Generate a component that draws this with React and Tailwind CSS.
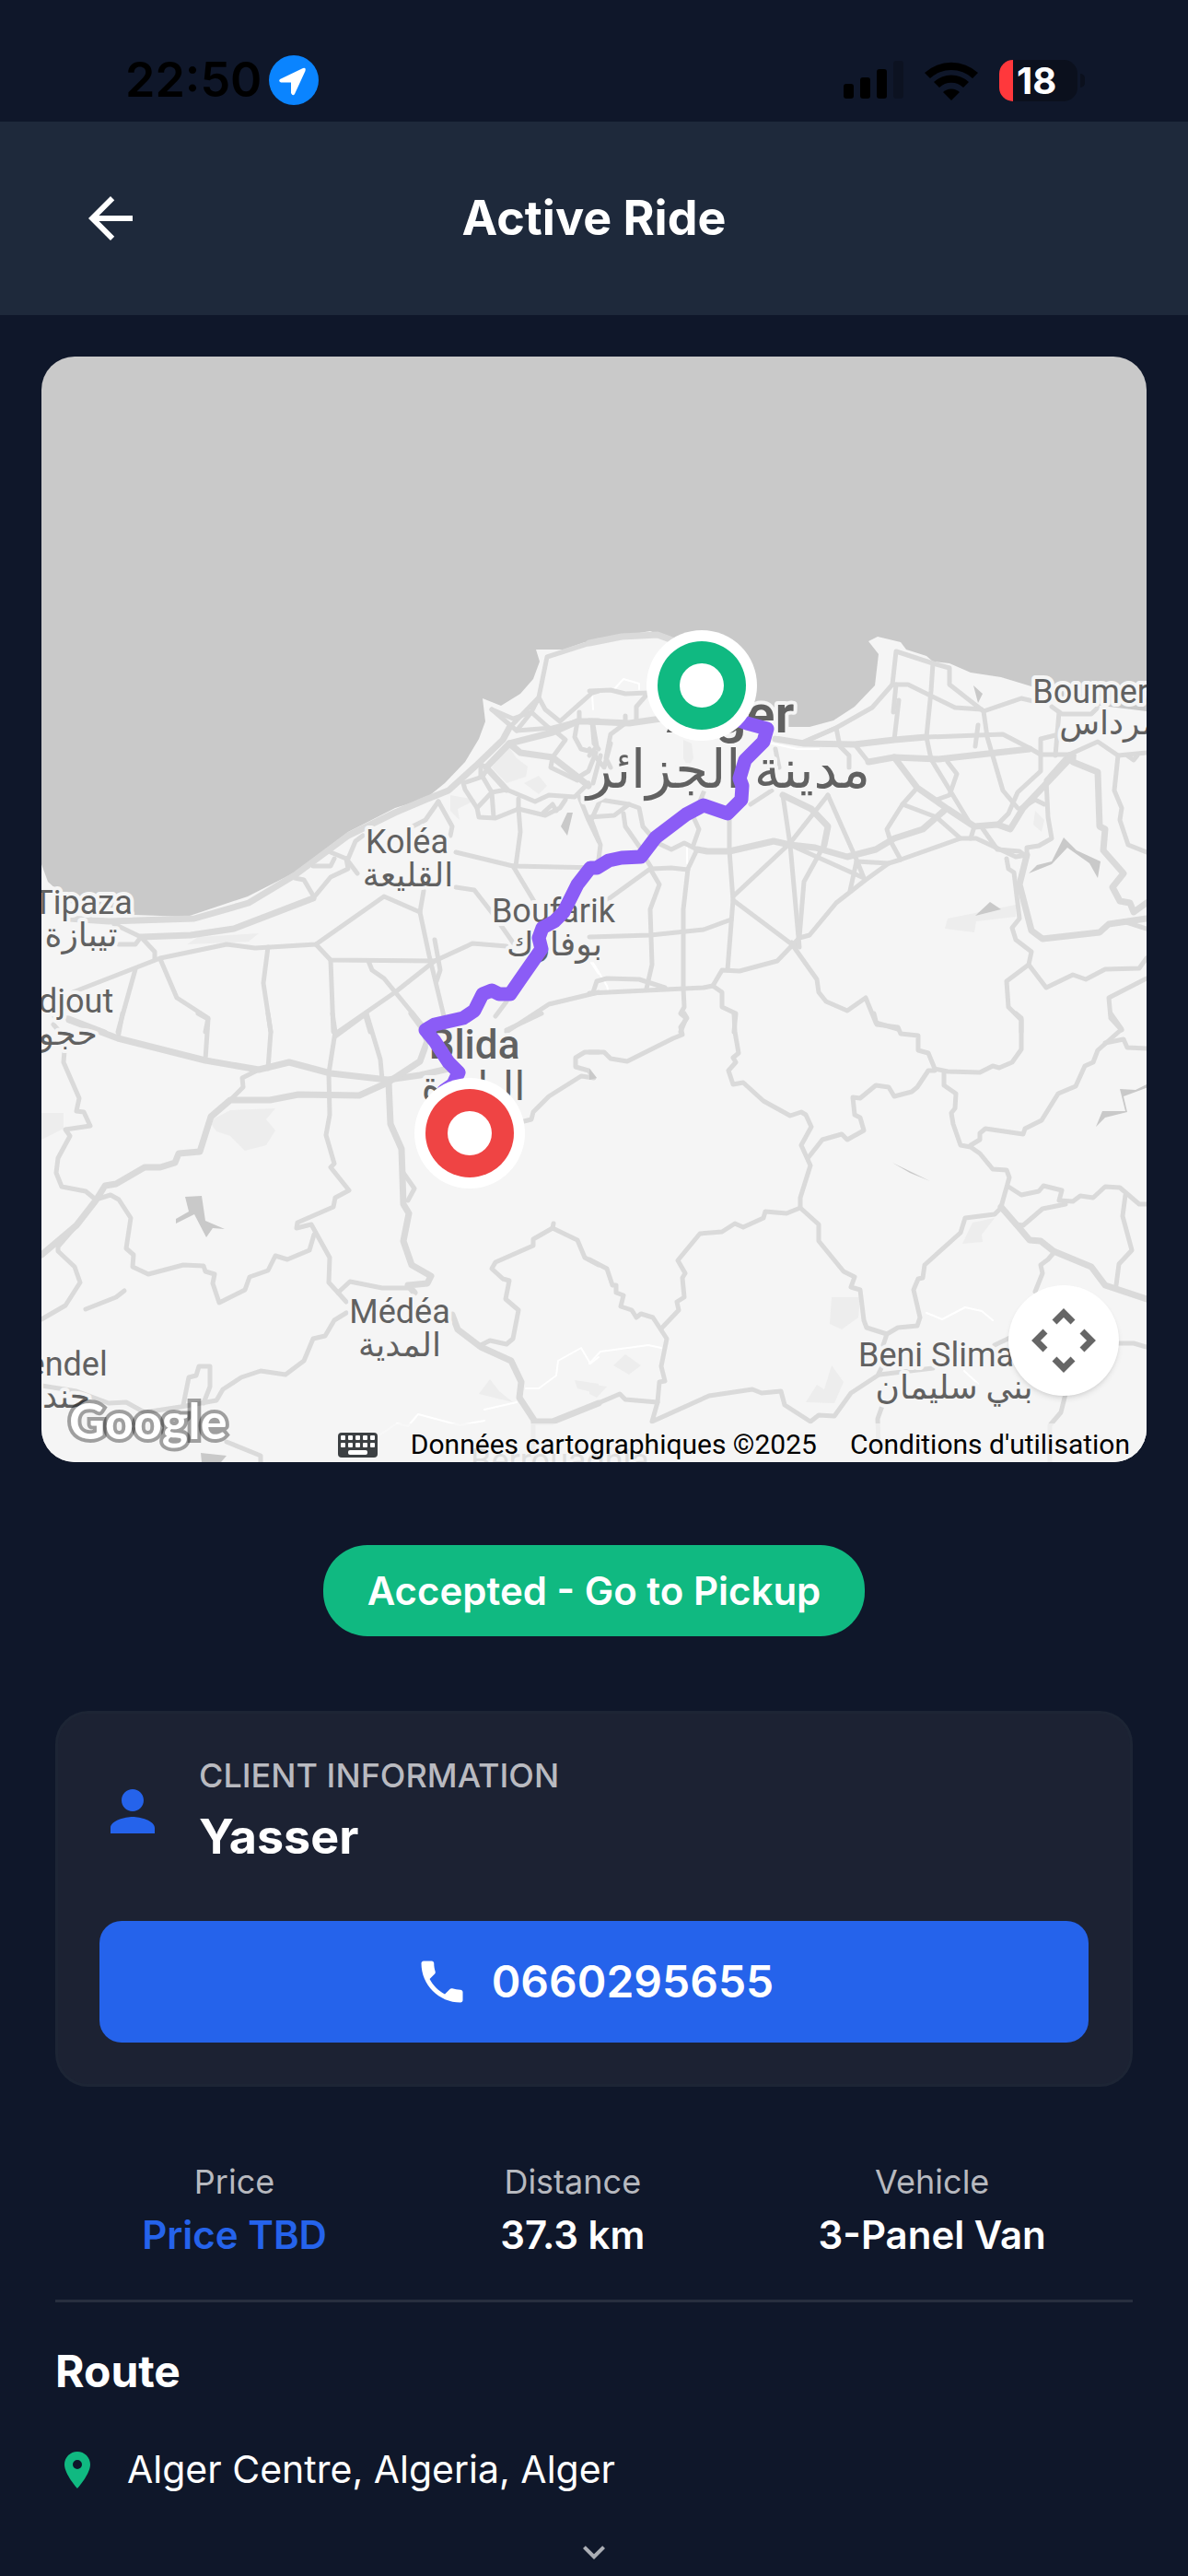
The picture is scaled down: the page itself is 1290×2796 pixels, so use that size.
import {
  MdArrowBack,
  MdKeyboardArrowDown,
  MdLocationOn,
  MdPerson,
  MdPhone,
} from 'react-icons/md';

// The map is digitised in four tiles; every tile has its own origin on the 1200x1200 canvas
const TILES = [
  {
    x: -5,
    y: 233,
    major: [
      '90,1130 200,1140 440,1130 590,1080 720,990 870,860 1000,785 1085,745 1150,715 1230,630 1300,550 1320,510',
      '1310,712 1255,640 1320,560 1440,525 1510,490 1568,490',
      '1320,560 1350,590 1440,605 1510,670 1540,700',
      '290,1190 430,1185 550,1165 770,1065',
    ],
    minor: [
      '1320,510 1400,410 1425,280 1568,225',
      '215,1150 290,1190 330,1240 330,1262',
      '770,1065 820,995 870,970 865,935 820,915',
      '230,1215 275,1215 290,1190',
      '100,1370 345,1260 530,1215 610,1227 780,1215 970,1060 1070,1110 1095,1250 1135,1450 1140,1500',
      '780,1215 820,1265 1110,1268 1215,1213 1310,1220',
      '345,1262 390,1390 478,1455 470,1500',
      '275,1295 225,1500',
      '645,1225 632,1340 653,1500',
      '820,1265 828,1500',
      '925,1270 935,1300 970,1325 1085,1490',
      '1110,1268 1000,1370 840,1500',
      '918,1450 930,1500',
      '720,1000 745,1005 772,1055',
      '770,960 820,960 830,935',
      '870,935 890,880 910,860',
      '865,935 895,985',
      '1080,1040 1070,1110',
      '1170,915 1330,960 1568,965',
      '1330,960 1390,1080',
      '1345,770 1350,850 1338,960',
      '1120,750 1160,830 1155,860',
      '1120,750 1085,810 1050,830',
      '1170,1030 1220,1038 1275,1120 1330,1210',
      '1190,690 1195,710 1230,770 1270,720 1245,670 1190,690',
      '1230,770 1235,800 1280,805 1345,775 1420,795 1460,770 1475,745',
      '1240,665 1240,630 1260,640 1245,670',
      '1270,720 1275,800',
      '1270,720 1310,712 1390,750 1430,730 1500,735 1540,690',
      '1345,775 1345,740',
      '1270,450 1330,480 1380,460 1430,510',
      '1270,450 1340,520 1380,460 1400,410 1420,450 1460,490 1550,395 1568,390',
      '1340,520 1440,510 1510,490',
      '1440,605 1435,640 1510,680',
      '1440,605 1475,550 1445,520',
      '1510,490 1500,540 1520,580 1560,590 1540,650 1515,670',
      '1515,460 1515,490 1550,490 1555,560 1568,580',
      '1110,1200 1125,1300 1115,1335',
      '1280,1450 1310,1400',
      '1310,1500 1430,1410 1568,1370',
      '1515,735 1540,810 1568,880',
      '50,1450 90,1455 190,1500',
      '1415,785 1440,760 1450,780',
    ],
    water: ['1482,785 1497,787 1480,860 1462,830'],
    parks: [
      '1315,570 1340,610 1370,635 1365,670 1310,690 1270,640',
      '1360,690 1400,665 1425,700 1400,725',
      '1155,730 1225,745 1175,775 1180,810 1155,780',
      '450,1190 620,1180 590,1205 420,1215',
    ],
    tracks: ['1550,400 1553,450', '1548,1275 1568,1310'],
  },
  {
    x: 595,
    y: 233,
    major: [
      '300,905 330,913 390,913 515,880 560,890 630,900 720,930 800,905 850,870 930,840 990,780',
      '520,545 600,562 740,565 850,550 940,540',
      '780,620 850,605 975,612 1230,578',
      '850,605 915,705 1000,775 1075,830 1140,825 1175,840 1210,770 1350,600',
      '1220,925 1200,1020 1235,1170 1265,1197 1425,1175 1450,1150 1555,1130',
      '540,730 620,775 665,830 655,890',
      '0,490 110,495 200,480',
      '1350,600 1350,620 1420,655 1425,830 1440,840 1435,910 1490,985 1460,1030 1480,1075 1510,1080 1520,1110 1555,1080',
      '0,235 90,212 190,208 240,228',
    ],
    minor: [
      '0,390 60,388 100,400 165,395 130,440 130,490',
      '100,470 100,495 60,530 45,610 60,640',
      '0,600 20,570 10,500',
      '0,580 40,640 60,560',
      '10,690 30,600',
      '940,540 1155,532 1230,575 1260,598 1340,598',
      '740,565 780,620',
      '600,555 690,510 790,445 845,370 855,260 960,300 1005,315 1005,370 1100,455 1205,415 1250,425',
      '845,370 890,368 1020,445 1095,450',
      '960,300 955,390 940,540 955,612 1065,825',
      '865,420 850,550',
      '855,370 848,460',
      '1100,455 1110,540 1155,715 1195,770',
      '1085,500 1078,570',
      '1310,460 1300,600',
      '1300,535 1260,545 1260,650 1195,720 1170,790 1140,825',
      '1340,598 1275,680 1280,800 1290,870 1255,895 1220,900 1220,930',
      '1000,620 1025,660 1005,730 970,745',
      '915,705 875,760 830,840 840,880 870,940',
      '875,760 970,800 1035,870 870,940 835,952',
      '390,790 392,910 400,1070 385,1300',
      '540,730 560,890 585,1225 565,1210',
      '665,730 560,885 400,1060',
      '665,730 745,940 765,1000 560,890',
      '655,890 600,1010 585,1190',
      '745,945 835,952 770,1005 690,1080 615,1185 585,1195 525,1270 420,1303 370,1300 345,1350 320,1355 0,1375',
      '745,945 728,1040',
      '0,1192 170,1185 320,1168 395,1135',
      '300,905 275,970 262,1100 262,1360 265,1420 255,1440 270,1455 255,1500',
      '50,1070 170,970 195,1020 170,1100 175,1280 160,1360',
      '155,930 175,970 230,965 275,972',
      '400,1070 565,1215 635,1330 640,1370 660,1400 720,1430 770,1390 800,1470 860,1490',
      '345,1350 370,1370 370,1420 410,1440 403,1500',
      '10,1370 20,1335 50,1325 140,1330 210,1355',
      '1035,870 1080,870 1190,930 1220,925',
      '1075,830 1065,870',
      '1095,835 1140,905 1200,912 1220,930',
      '1165,935 1170,970 1185,980 1200,1130 1180,1160 1190,1200 1235,1240 1225,1280 1165,1335 1170,1420 1205,1460 1205,1500',
      '1225,1280 1275,1355 1350,1315 1385,1330 1440,1297 1535,1292 1555,1260',
      '1555,1325 1450,1390 1455,1455 1485,1495',
      '1340,598 1420,555 1475,600 1555,592',
      '1475,600 1465,715 1485,770 1480,810 1505,890 1555,915',
      '1490,1140 1555,1165',
      '1290,440 1320,465 1400,465 1420,445',
      '1500,600 1520,615 1530,600',
      '0,800 70,795 110,760 140,770 150,830 190,885 230,905 265,885 300,905',
      '110,760 30,745 5,810 30,890 25,940',
      '95,790 100,830 160,930',
      '320,720 290,800 305,840 290,890',
      '450,760 510,715',
      '620,545 690,510 700,570 725,600 725,640',
      '520,580 530,640',
      '1205,770 1245,745 1270,760',
    ],
    water: [
      '1072,372 1097,400 1085,430',
      '1225,985 1250,958 1290,945 1325,868 1360,910 1428,945 1420,998 1395,950 1335,900 1290,955',
      '1077,1123 1117,1077 1148,1102',
    ],
    parks: [
      '262,550 285,560 290,610 275,640 262,610',
      '1000,1132 1190,1085 1190,1125 1080,1140 1075,1175 992,1165',
      '1245,780 1270,810 1262,850 1240,825',
    ],
    tracks: ['70,385 95,352 140,365 140,385', '510,560 580,580 640,580', '273,900 273,950', '10,1275 50,1350 55,1375'],
  },
  {
    x: -5,
    y: 713,
    major: [
      '90,20 225,82 470,152 620,182 705,160 820,195 980,215 1070,200 1150,180',
      '1045,0 1075,45 1090,90 1070,155 980,225 900,268 730,265 650,283 540,283 485,335 455,450 395,455 385,485 345,502 300,500 220,555 190,562 165,610 110,690 13,785',
      '983,225 988,360 1018,440 1022,620 1038,650 1022,740 1045,820 1100,855 1090,880 1035,885 1055,910',
      '1160,980 1175,1030 1240,1085 1325,1130 1352,1200 1348,1250 1390,1328 1440,1328 1568,1268',
    ],
    minor: [
      '240,0 225,82',
      '450,0 478,18 470,150',
      '645,0 653,60 645,180',
      '825,0 832,60 815,195 818,330 808,395 830,490 820,500 850,545 872,575 833,600 828,630 728,680 725,698 765,688 818,795 815,875 840,910 865,940',
      '832,75 920,0 960,150 965,215',
      '620,182 572,210 575,240 540,283',
      '1022,520 1055,570 1035,610',
      '840,910 875,872 965,895 1035,893',
      '45,35 80,80 75,160 118,275 110,318 130,322 148,365 80,378 92,400 60,470 55,520 70,565 135,580 165,605',
      '165,605 205,590 230,605 262,665 250,765 270,785 268,825 310,850 410,818 465,822 470,840 495,850 490,880 510,942 580,900 595,858 645,838 665,790 700,800 760,770 775,720',
      '110,690 60,760 60,775 105,825 122,875 80,950 13,995',
      '135,962 220,925 245,903',
      '865,975 830,1000 805,1050 770,1060 745,1130 695,1175 625,1165 570,1185 520,1225 500,1260 400,1280 300,1300 250,1265 200,1270 110,1230 13,1212',
      '410,1275 425,1185 445,1180 453,1150 483,1150 483,1215 465,1270',
      '530,1395 625,1440 625,1465',
      '1240,1080 1265,1065 1310,1078 1328,1058 1345,965 1308,930 1320,870 1300,865 1270,830 1280,810 1385,755 1385,735 1440,700 1510,738 1530,795 1568,820',
      '1360,350 1380,345 1385,320 1430,270 1520,205 1555,210 1540,185 1505,175 1505,145 1530,125 1568,125',
      '1310,55 1410,0',
      '1440,700 1443,685',
      '1385,1328 1385,1462',
    ],
    water: [
      '413,598 460,595 470,675 525,702 490,700 472,730 440,655 387,683 387,668 425,645',
      '458,1430 530,1440 515,1462 460,1462',
    ],
    parks: [
      '480,350 540,315 665,310 640,345 665,380 640,430 580,448 540,400 500,385',
      '13,325 75,325 75,375 13,410',
      '1265,1190 1290,1230 1330,1265 1235,1240',
      '1500,1195 1568,1205 1568,1240 1510,1220',
    ],
    tracks: ['960,1370 1005,1335 1035,1345 1065,1305 1180,1340 1250,1325', '1365,1220 1400,1220 1450,1180 1455,1130 1520,1090 1545,1140 1568,1120', '1250,1290 1340,1265'],
  },
  {
    x: 595,
    y: 713,
    major: [
      '1150,630 1200,700 1230,738 1260,740 1295,775 1400,825 1440,885 1555,930',
    ],
    minor: [
      '0,125 40,125 60,148 105,155 235,80 260,68 255,45 272,15 265,0',
      '403,0 405,60 417,130 400,145 410,160 388,185 400,230 430,225 485,285 560,332 590,322 605,330 620,368 590,430 617,495 588,600 588,632 640,688 640,740 710,840 740,858 730,890 755,900 765,1000 775,1022 830,1045',
      '795,0 802,35 860,45 870,65 918,72 918,120 945,130 965,180 1000,190 1090,192 1125,170 1145,178 1180,158 1205,118 1205,15 1190,0',
      '965,185 945,187 915,240 900,255 850,270 835,240 800,235 755,275 735,272 740,330 755,340 765,380 720,412 705,392 650,410 613,468',
      '990,195 990,235 1022,262 1020,310 1010,325 1015,360 1035,428 1065,435 1090,455 1125,508 1165,510 1172,535 1150,630',
      '1065,430 1090,410 1090,390 1105,375 1210,393 1215,375 1262,348 1308,262 1358,238 1382,172 1405,160 1418,120 1485,50 1455,0',
      '1440,95 1490,85 1500,110 1555,115',
      '1170,565 1205,590 1255,578 1268,562 1318,575 1312,610 1350,612 1370,595 1405,600 1440,565 1480,568 1535,622 1555,622',
      '1190,688 1210,690 1265,635 1330,620',
      '1495,590 1488,660 1515,770 1478,815 1470,885',
      '1148,632 1130,655 1050,665 1035,715 935,818 930,860 918,865 905,900 922,990 915,1018 860,1022 830,1045 820,1080',
      '588,632 550,652 490,645 485,665 430,697 405,685 370,710 308,717 247,805 268,845 260,860 265,925 245,940 250,965 200,1025',
      '0,800 50,832 65,885 75,885 75,910 95,918 88,955 118,965 130,990 145,978 178,990 215,1060 200,1150 212,1198 195,1200 190,1265 175,1330 335,1245 455,1223 480,1235 535,1230 545,1275 618,1330 640,1308 685,1310 730,1235 805,1180 815,1155',
      '0,1280 85,1240 100,1258 190,1265',
      '1295,780 1280,800 1260,820 1265,845 1245,905',
      '1130,1080 1200,1040',
      '1475,1075 1520,1075 1555,1085',
      '1330,1240 1315,1300 1285,1340 1285,1460',
      '820,1270 805,1320 808,1400',
      '810,1175 960,1155',
    ],
    water: [
      '0,180 20,210 0,215',
      '1480,245 1525,248 1560,228 1560,240 1492,270 1502,322 1440,340 1415,370 1432,318 1495,318',
      '845,485 950,547 895,518',
    ],
    parks: [
      '675,925 755,925 750,990 705,1030 670,1010',
      '675,1145 710,1200 685,1270 605,1265 635,1210 655,1225',
      '1070,680 1130,665 1095,720 1098,745 1040,750',
      '100,1110 145,1145 110,1175 68,1145',
      '0,1205 50,1215 20,1250 0,1240',
    ],
    tracks: ['0,1140 30,1100 165,1080 200,1090', '940,975 985,995 1050,958 1095,970 1125,1000', '1045,1165 1085,1205'],
  },
];

const COAST =
  'M0 551 7 570 40 600 100 606 158 608 224 586 275 560 333 516 384 490 417 480 438 463 460 440 475 415 482 396 479 371 499 379 520 366 534 350 541 331 537 318 567 318 590 310 626 304 661 298 688 308 750 330 765 380 800 402 834 402 860 395 883 380 905 357 909 323 898 309 908 304 933 310 939 318 961 325 968 331 986 333 1009 343 1042 348 1075 358 1110 374 1200 385V1200H0Z';

const RIDE_PATH =
  'M717 380 766 398 788 404 784 418 764 438 758 458 761 466 760 481 745 496 719 487 700 497 667 522 651 543 630 544 616 547 603 555 596 555 582 573 567 603 557 613 544 620 540 631 543 643 520 676 509 692 497 692 489 688 479 692 470 710 458 718 427 725 417 731 427 743 442 766 453 777 447 790 437 797 465 843';

const PLACES = [
  { x: 397, y: 539, name: 'Koléa', arabicX: 398, arabicY: 575, arabic: 'القليعة' },
  { x: 45, y: 605, name: 'Tipaza', arabicX: 43, arabicY: 640, arabic: 'تيبازة' },
  { x: 15, y: 712, name: 'Hadjout', arabicX: 12, arabicY: 747, arabic: 'حجوط' },
  { x: 556, y: 614, name: 'Boufarik', arabicX: 557, arabicY: 650, arabic: 'بوفارك' },
  { x: 1168, y: 376, name: 'Boumerdès', arabicX: 1174, arabicY: 410, arabic: 'بومرداس' },
  { x: 389, y: 1049, name: 'Médéa', arabicX: 389, arabicY: 1085, arabic: 'المدية' },
  { x: 12, y: 1106, name: 'Djendel', arabicX: 14, arabicY: 1141, arabic: 'جندل' },
  { x: 991, y: 1096, name: 'Beni Slimane', arabicX: 991, arabicY: 1131, arabic: 'بني سليمان' },
];

const STATS = [
  { label: 'Price', value: 'Price TBD', color: 'text-[#2563eb]' },
  { label: 'Distance', value: '37.3 km', color: 'text-white' },
  { label: 'Vehicle', value: '3-Panel Van', color: 'text-white' },
];

function place(tile, line) {
  return line
    .split(' ')
    .map((pair) => {
      const [x, y] = pair.split(',').map(Number);
      return `${Math.round(tile.x + x * 0.389)},${Math.round(tile.y + y / 3)}`;
    })
    .join(' ');
}

function Marker({ x, y, color }) {
  return (
    <g>
      <circle cx={x} cy={y} r="60" fill="#fff" />
      <circle cx={x} cy={y} r="48" fill={color} />
      <circle cx={x} cy={y} r="24" fill="#fff" />
    </g>
  );
}

function MapCanvas() {
  return (
    <svg viewBox="0 0 1200 1200" className="block h-full w-full" role="img" aria-label="Ride map">
      <rect width="1200" height="1200" fill="#c9c9c9" />
      <path d={COAST} fill="#f5f5f5" />

      {TILES.map((tile) => (
        <g key={`${tile.x}:${tile.y}`} fill="none" strokeLinejoin="round" strokeLinecap="round">
          {tile.parks.map((line) => (
            <polygon key={line} points={place(tile, line)} fill="#ededed" />
          ))}
          {tile.water.map((line) => (
            <polygon key={line} points={place(tile, line)} fill="#c9c9c9" />
          ))}
          {tile.tracks.map((line) => (
            <polyline key={line} points={place(tile, line)} stroke="#fff" strokeWidth="2" />
          ))}
          {tile.minor.map((line) => (
            <polyline key={line} points={place(tile, line)} stroke="#dadada" strokeWidth="5" />
          ))}
          {tile.major.map((line) => (
            <polyline key={line} points={place(tile, line)} stroke="#dadada" strokeWidth="7" />
          ))}
        </g>
      ))}

      <g
        fill="#616161"
        stroke="#f5f5f5"
        strokeWidth="8"
        strokeLinejoin="round"
        textAnchor="middle"
        paintOrder="stroke"
        className="font-['Roboto','DejaVu_Sans',sans-serif]"
      >
        {PLACES.map((p) => (
          <g key={p.name} fontSize="36">
            <text x={p.x} y={p.y}>{p.name}</text>
            <text x={p.arabicX} y={p.arabicY}>{p.arabic}</text>
          </g>
        ))}
        <text x="748" y="408" fontSize="58" fontWeight="600">Alger</text>
        <text x="746" y="468" fontSize="58">مدينة الجزائر</text>
        <text x="470" y="762" fontSize="44" fontWeight="500">Blida</text>
        <text x="469" y="807" fontSize="44">البليدة</text>
        <text x="563" y="1211" fontSize="36" opacity="0.5">Berrouaghia</text>
      </g>

      <path
        d={RIDE_PATH}
        fill="none"
        stroke="#8b5cf6"
        strokeWidth="15"
        strokeLinejoin="round"
        strokeLinecap="round"
      />
      <Marker x={717} y={357} color="#10b981" />
      <Marker x={465} y={843} color="#ef4444" />

      <text
        x="30"
        y="1175"
        fontSize="54"
        fontWeight="700"
        fill="#fff"
        stroke="#000"
        strokeOpacity="0.35"
        strokeWidth="8"
        paintOrder="stroke"
        className="font-['Lato',sans-serif]"
      >
        Google
      </text>
    </svg>
  );
}

function StatusBar() {
  return (
    <div className="flex h-[132px] items-center justify-between pt-[42px] pr-[112px] pl-[136px]">
      <div className="flex items-center gap-2 text-[52px] leading-none font-semibold text-black">
        <span>22:50</span>
        <svg width="54" height="54" viewBox="0 0 54 54" aria-hidden="true">
          <circle cx="27" cy="27" r="27" fill="#0a84ff" />
          <path
            d="M37 14 12 26q-2 2 1 3.500H24V41q2 4 4 1L39.500 17q1-4-2.500-3z"
            fill="#fff"
          />
        </svg>
      </div>

      <div className="flex items-center gap-[23px]">
        <svg width="65" height="42" viewBox="0 0 65 42" aria-hidden="true">
          <rect x="0" y="25" width="11" height="16" rx="3" />
          <rect x="18" y="18" width="11" height="23" rx="3" />
          <rect x="36" y="9" width="11" height="32" rx="3" />
          <rect x="54" y="0" width="11" height="41" rx="3" opacity="0.2" />
        </svg>
        <svg width="58" height="43" viewBox="0 0 58 43" aria-hidden="true">
          <path d="M0 13a43 43 0 0 1 58 0l-6 6a34 34 0 0 0-46 0z" />
          <path d="M10 23a28 28 0 0 1 38 0l-6 6a19 19 0 0 0-26 0z" />
          <path d="M20 34a13 13 0 0 1 18 0l-9 9z" />
        </svg>
        <div className="flex items-center gap-[3px]">
          <div className="flex h-[45px] w-[85px] overflow-hidden rounded-[15px] bg-[#0b101d]">
            <div className="w-[15px] bg-[#ff383c]" />
            <span className="pl-1 text-[40px] leading-[45px] font-bold text-white">18</span>
          </div>
          <div className="h-[15px] w-[5px] rounded-r-full bg-[#0b101d]" />
        </div>
      </div>
    </div>
  );
}

function RideMap() {
  return (
    <section className="relative mx-[45px] mt-[45px] aspect-square overflow-hidden rounded-[36px]">
      <MapCanvas />

      <button
        aria-label="Map camera controls"
        className="absolute right-[30px] bottom-[72px] flex size-[120px] items-center justify-center rounded-full bg-white shadow-md"
      >
        <svg width="70" height="70" viewBox="0 0 70 70" fill="none" stroke="#666" strokeWidth="7">
          <path d="M25 15 35 5 45 15M25 55 35 65 45 55M15 25 5 35 15 45M55 25 65 35 55 45" />
        </svg>
      </button>

      <div className="absolute right-0 bottom-0 flex h-[42px] items-center gap-9 bg-[#f5f5f5]/70 pt-1 pr-[18px] pl-4 font-['Roboto',sans-serif] text-[30px] leading-none text-black">
        <button aria-label="Keyboard shortcuts">
          <svg width="43" height="27" viewBox="0 0 43 27">
            <rect width="43" height="27" rx="4" fill="#3c4043" />
            <g fill="#fff">
              {[3, 11, 19, 27, 35].map((x) => (
                <g key={x}>
                  <rect x={x} y="3" width="5" height="5" rx="1" />
                  <rect x={x} y="11" width="5" height="5" rx="1" />
                </g>
              ))}
              <rect x="11" y="19" width="21" height="5" rx="2" />
            </g>
          </svg>
        </button>
        <span>Données cartographiques ©2025</span>
        <a href="#terms">Conditions d'utilisation</a>
      </div>
    </section>
  );
}

function ClientCard() {
  return (
    <section className="rounded-[36px] border-3 border-[#1d2535] bg-[#1c2233] p-[45px]">
      <div className="flex items-center gap-9">
        <MdPerson className="size-[72px] text-[#2563eb]" />
        <div>
          <p className="text-[36px] leading-[44px] font-medium text-[#b9bac0]">CLIENT INFORMATION</p>
          <p className="mt-3 text-[52px] leading-[66px] font-bold text-white">Yasser</p>
        </div>
      </div>
      <button className="mt-[58px] flex h-[132px] w-full items-center justify-center gap-6 rounded-3xl bg-[#2563eb] text-[48px] font-semibold text-white">
        <MdPhone className="size-[60px]" />
        0660295655
      </button>
    </section>
  );
}

export default function App() {
  return (
    <div className="min-h-screen bg-[#0f172a] font-['Inter',sans-serif]">
      <StatusBar />

      <header className="grid h-[210px] grid-cols-[72px_1fr_72px] items-center bg-[#1e293b] px-[84px]">
        <button aria-label="Back">
          <MdArrowBack className="size-[72px] text-white" />
        </button>
        <h1 className="text-center text-[52px] font-bold text-white">Active Ride</h1>
      </header>

      <RideMap />

      <main className="px-[60px]">
        <div className="mt-[90px] flex justify-center">
          <span className="rounded-[48px] bg-[#10b981] px-12 py-6 text-[42px] leading-[51px] font-semibold text-white">
            Accepted - Go to Pickup
          </span>
        </div>

        <div className="mt-[81px]">
          <ClientCard />
        </div>

        <dl className="mt-[81px] flex justify-around border-b-3 border-[#272e3f] pb-[45px] text-center">
          {STATS.map((stat) => (
            <div key={stat.label}>
              <dt className="text-[36px] leading-[45px] text-[#b7b9bf]">{stat.label}</dt>
              <dd className={`mt-[9px] text-[42px] leading-[51px] font-semibold ${stat.color}`}>{stat.value}</dd>
            </div>
          ))}
        </dl>

        <h2 className="mt-[45px] text-[48px] leading-[60px] font-bold text-white">Route</h2>
        <div className="mt-[51px] flex items-center gap-[30px]">
          <MdLocationOn className="size-12 text-[#10b981]" />
          <p className="text-[41px] leading-[51px] text-white">Alger Centre, Algeria, Alger</p>
        </div>

        <button aria-label="Show more" className="mx-auto mt-10 block">
          <MdKeyboardArrowDown className="size-12 text-[#abaeb5]" />
        </button>
      </main>
    </div>
  );
}
